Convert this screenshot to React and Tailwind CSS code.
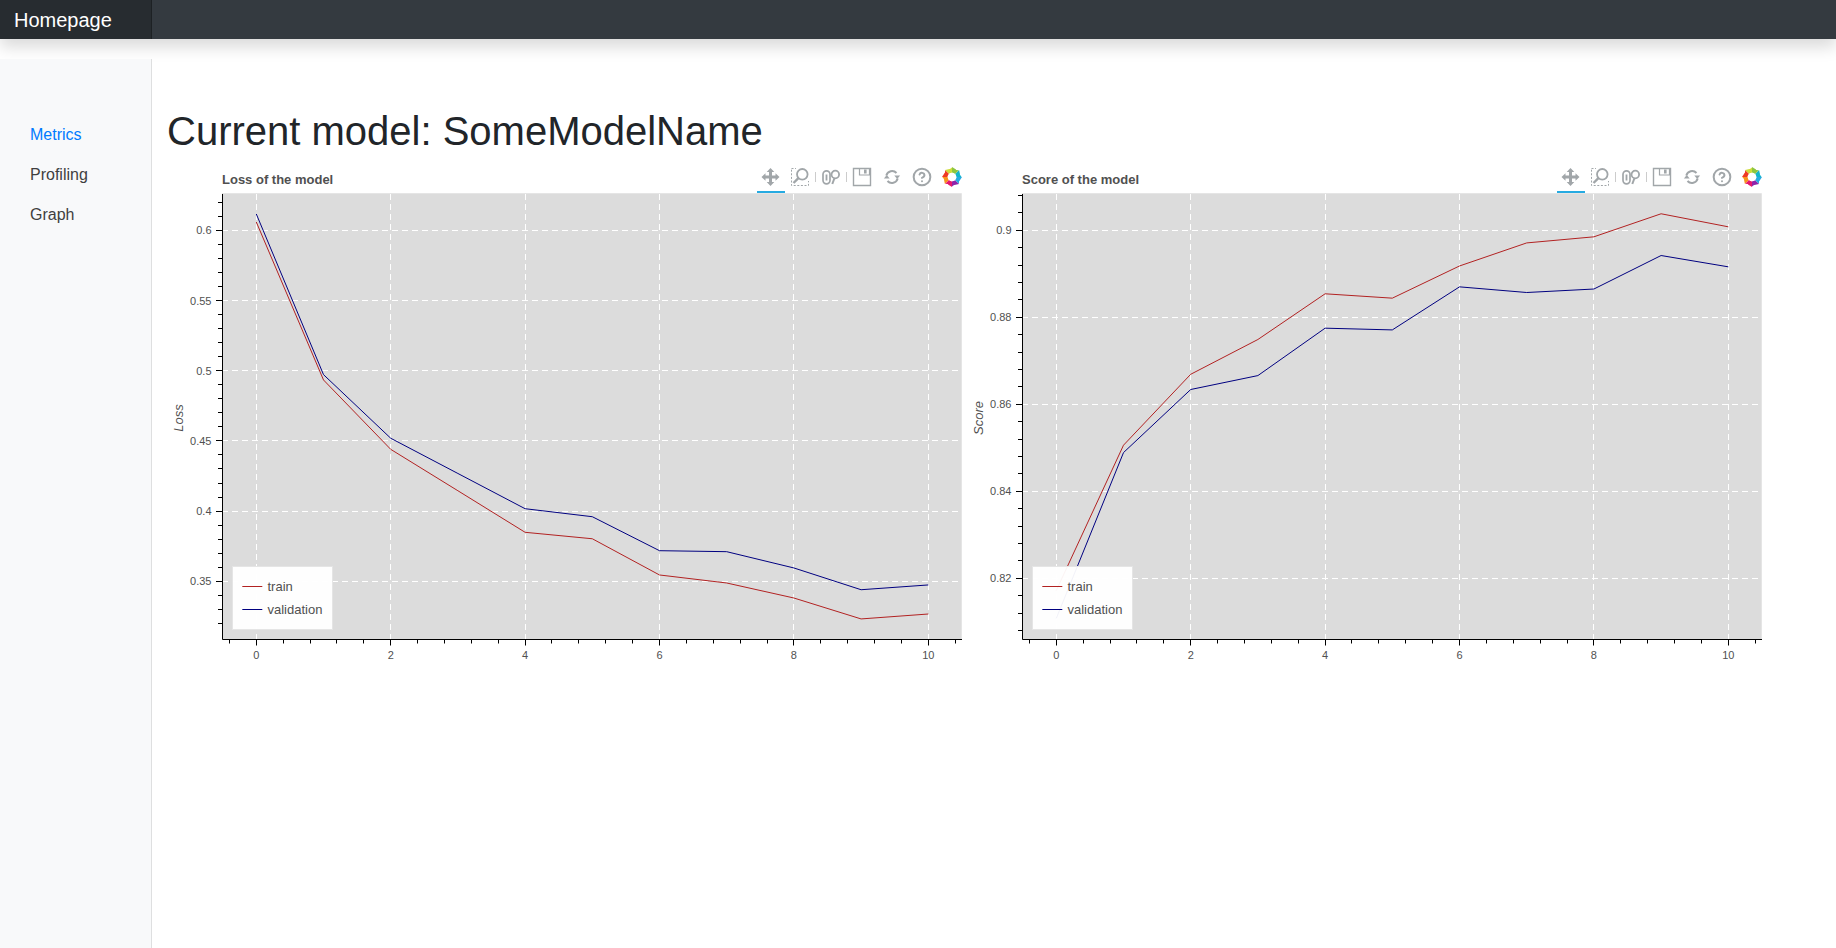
import React from "react";
import { CircleHelp } from "lucide-react";

const ICON = "#a1a6a9";
const CANVAS_TEXT = "#505050";

// plot geometry, in px inside the chart svg
const PLOT_LEFT = 55;
const PLOT_RIGHT = 795;
const PLOT_TOP = 1;
const PLOT_BOTTOM = 446.5;
const X0 = 89.3;
const X_STEP = 67.2;

const snap = (v) => Math.floor(v) + 0.5;
const xPos = (x) => X0 + x * X_STEP;

const charts = [
  {
    title: "Loss of the model",
    yLabel: "Loss",
    y0: 0.6,
    y0Px: 37.3,
    pxPerUnit: 1404,
    yTicks: [0.6, 0.55, 0.5, 0.45, 0.4, 0.35],
    minorStep: 0.01,
    yMinMax: [0.318, 0.626],
    train: [0.6059, 0.4934, 0.444, 0.4145, 0.3849, 0.3803, 0.3545, 0.3488, 0.3381, 0.3232, 0.3267],
    validation: [0.6116, 0.4972, 0.4519, 0.4268, 0.4017, 0.396, 0.3718, 0.3711, 0.3595, 0.344, 0.3474],
  },
  {
    title: "Score of the model",
    yLabel: "Score",
    y0: 0.9,
    y0Px: 37.3,
    pxPerUnit: 4350,
    yTicks: [0.9, 0.88, 0.86, 0.84, 0.82],
    minorStep: 0.004,
    yMinMax: [0.8064, 0.9088],
    train: [0.8172, 0.8506, 0.8669, 0.8749, 0.8854, 0.8844, 0.8918, 0.8971, 0.8985, 0.9038, 0.9008],
    validation: [0.8108, 0.8489, 0.8634, 0.8666, 0.8775, 0.8771, 0.887, 0.8857, 0.8865, 0.8942, 0.8916],
  },
];

function PanIcon() {
  return (
    <svg width="18" height="18" viewBox="0 0 18 18" fill={ICON} className="overflow-visible">
      <path
        d="M0 -9L3.8 -5H1.5V-1.5H5V-3.8L9 0L5 3.8V1.5H1.5V5H3.8L0 9L-3.8 5H-1.5V1.5H-5V3.8L-9 0L-5 -3.8V-1.5H-1.5V-5H-3.8Z"
        transform="translate(8.5 9)"
      />
    </svg>
  );
}

function BoxZoomIcon() {
  return (
    <svg width="20" height="20" viewBox="0 0 20 20" fill="none" stroke={ICON}>
      <rect x="1.5" y="1.5" width="17" height="17" strokeDasharray="2 1.6" strokeWidth="1" />
      <rect x="6" y="0" width="14" height="14" fill="#fff" stroke="none" />
      <circle cx="12.3" cy="7.3" r="5.3" strokeWidth="1.8" />
      <path d="M8.4 11.2L3.5 16" strokeWidth="2.4" />
    </svg>
  );
}

function WheelZoomIcon() {
  return (
    <svg width="20" height="20" viewBox="0 0 20 20" fill="none" stroke={ICON}>
      <rect x="2" y="3.8" width="7" height="13" rx="3.5" strokeWidth="1.7" />
      <path d="M5.5 7.5v6" strokeWidth="1.8" />
      <circle cx="14.3" cy="7.5" r="3.8" strokeWidth="1.8" />
      <path d="M13.3 11.5L11.3 17" strokeWidth="2" />
    </svg>
  );
}

function SaveIcon() {
  return (
    <svg width="20" height="20" viewBox="0 0 20 20" fill="none" stroke={ICON}>
      <path d="M1.5 1.5h17v17h-17z" strokeWidth="1.4" />
      <path d="M7.5 1.5v6.5h10v-6.5" strokeWidth="1.2" />
      <rect x="12" y="2.5" width="2.6" height="4" fill={ICON} stroke="none" />
    </svg>
  );
}

function ResetIcon() {
  return (
    <svg width="18" height="18" viewBox="0 0 18 18" fill="none" stroke={ICON} strokeWidth="2" className="overflow-visible">
      <path d="M3.3 7.5A6 6 0 0 1 13.5 5" />
      <path d="M14.7 10.5A6 6 0 0 1 4.5 13" />
      <path d="M11.3 7.5h5.8l-2.9 3.4z" fill={ICON} stroke="none" />
      <path d="M0.9 10.5h5.8l-2.9-3.4z" fill={ICON} stroke="none" />
    </svg>
  );
}

function BokehLogo() {
  const colors = ["#8dc63f", "#12b5cb", "#26aae1", "#8e24aa", "#e6186d", "#f7941d", "#ee3a24", "#cddc39"];
  return (
    <svg width="20" height="20" viewBox="0 0 20 20">
      {colors.map((c, i) => (
        <path
          key={c}
          d="M10 0L14 2.6L13.2 6.4L10 5.4z"
          fill={c}
          transform={`rotate(${i * 45} 10 10)`}
        />
      ))}
      {colors.map((c, i) => (
        <path
          key={"b" + c}
          d="M10 0.4L6.6 3L8 6L10 5.4z"
          fill={colors[(i + 7) % 8]}
          transform={`rotate(${i * 45} 10 10)`}
        />
      ))}
    </svg>
  );
}

function ToolButton({ children, active }) {
  return (
    <div
      className={`flex items-center justify-center h-[30px] border-b-2 ${
        active ? "w-[28px] ml-[2px] border-[#26aae1]" : "w-[30px] border-transparent"
      }`}
    >
      {children}
    </div>
  );
}

function ToolSeparator() {
  return (
    <div className="h-[30px] w-px flex items-center pb-[2px]">
      <div className="w-px h-[10px] bg-[#cccccc]" />
    </div>
  );
}

function Toolbar() {
  return (
    <div className="flex items-start">
      <ToolButton active>
        <PanIcon />
      </ToolButton>
      <ToolButton>
        <BoxZoomIcon />
      </ToolButton>
      <ToolSeparator />
      <ToolButton>
        <WheelZoomIcon />
      </ToolButton>
      <ToolSeparator />
      <ToolButton>
        <SaveIcon />
      </ToolButton>
      <ToolButton>
        <ResetIcon />
      </ToolButton>
      <ToolButton>
        <CircleHelp size={20} color={ICON} strokeWidth={2.4} />
      </ToolButton>
      <ToolButton>
        <BokehLogo />
      </ToolButton>
    </div>
  );
}

function Chart({ chart }) {
  const yPos = (v) => chart.y0Px + (chart.y0 - v) * chart.pxPerUnit;
  const line = (values) => values.map((v, i) => `${xPos(i)},${yPos(v)}`).join(" ");

  const xMinor = [];
  for (let i = -1; i <= 26; i++) {
    if (i % 5 !== 0) xMinor.push(i * 0.4);
  }
  const yMinor = [];
  const n = Math.round((chart.yMinMax[1] - chart.yMinMax[0]) / chart.minorStep);
  for (let i = 0; i <= n + 1; i++) {
    const v = chart.y0 + (Math.round((chart.yMinMax[0] - chart.y0) / chart.minorStep) + i) * chart.minorStep;
    if (yPos(v) > PLOT_TOP && yPos(v) < PLOT_BOTTOM) yMinor.push(v);
  }

  return (
    <div className="w-[800px] shrink-0">
      <div className="flex justify-between h-[30px]">
        <div className="pl-[55px] pt-[9px] text-[13px] leading-[15px] font-bold text-[#505050]">
          {chart.title}
        </div>
        <Toolbar />
      </div>
      <svg width="795" height="480" className="block" fontSize="11">
        <rect x={PLOT_LEFT} y={PLOT_TOP} width={PLOT_RIGHT - PLOT_LEFT} height={PLOT_BOTTOM - PLOT_TOP} fill="#dcdcdc" />
        <path d={`M${PLOT_LEFT} 0.5H${PLOT_RIGHT - 0.5}V${PLOT_BOTTOM}`} fill="none" stroke="#e5e5e5" />

        {[0, 2, 4, 6, 8, 10].map((x) => (
          <line key={x} x1={snap(xPos(x))} x2={snap(xPos(x))} y1={PLOT_TOP} y2={PLOT_BOTTOM} stroke="#fff" strokeDasharray="6 4" />
        ))}
        {chart.yTicks.map((v) => (
          <line key={v} x1={PLOT_LEFT} x2={PLOT_RIGHT} y1={snap(yPos(v))} y2={snap(yPos(v))} stroke="#fff" strokeDasharray="6 4" />
        ))}

        <polyline points={line(chart.train)} fill="none" stroke="#b22222" />
        <polyline points={line(chart.validation)} fill="none" stroke="#000080" />

        <path d={`M${PLOT_LEFT + 0.5} 1V${PLOT_BOTTOM}H${PLOT_RIGHT}`} fill="none" stroke="#000" />
        {xMinor.map((x) => (
          <line key={x} x1={snap(xPos(x))} x2={snap(xPos(x))} y1={PLOT_BOTTOM} y2={PLOT_BOTTOM + 4} stroke="#000" />
        ))}
        {[0, 2, 4, 6, 8, 10].map((x) => (
          <g key={x}>
            <line x1={snap(xPos(x))} x2={snap(xPos(x))} y1={PLOT_BOTTOM} y2={PLOT_BOTTOM + 6} stroke="#000" />
            <text x={xPos(x)} y={PLOT_BOTTOM + 19.5} textAnchor="middle" fill={CANVAS_TEXT}>
              {x}
            </text>
          </g>
        ))}
        {yMinor.map((v) => (
          <line key={v} x1={PLOT_LEFT - 4} x2={PLOT_LEFT} y1={snap(yPos(v))} y2={snap(yPos(v))} stroke="#000" />
        ))}
        {chart.yTicks.map((v) => (
          <g key={v}>
            <line x1={PLOT_LEFT - 6} x2={PLOT_LEFT} y1={snap(yPos(v))} y2={snap(yPos(v))} stroke="#000" />
            <text x={PLOT_LEFT - 10.5} y={yPos(v) + 4} textAnchor="end" fill={CANVAS_TEXT}>
              {v}
            </text>
          </g>
        ))}
        <text
          transform="translate(16 225) rotate(-90)"
          textAnchor="middle"
          fontSize="13"
          fontStyle="italic"
          fill={CANVAS_TEXT}
        >
          {chart.yLabel}
        </text>

        <rect x="65.5" y="373.5" width="100" height="63" fill="#fff" fillOpacity="0.95" stroke="#e5e5e5" />
        <line x1="75.3" x2="95.3" y1="393.5" y2="393.5" stroke="#b22222" />
        <line x1="75.3" x2="95.3" y1="416.5" y2="416.5" stroke="#000080" />
        <text x="100.5" y="397.5" fontSize="13" fill={CANVAS_TEXT}>
          train
        </text>
        <text x="100.5" y="420.5" fontSize="13" fill={CANVAS_TEXT}>
          validation
        </text>
      </svg>
    </div>
  );
}

export default function App() {
  const navItems = ["Metrics", "Profiling", "Graph"];

  return (
    <div className="h-screen overflow-hidden flex flex-col bg-white font-['Liberation_Sans',sans-serif]">
      {/* Navbar */}
      <div className="relative h-[39px] shrink-0 flex bg-[#343a40] shadow-[0_8px_16px_rgba(0,0,0,0.15)]">
        <div className="w-[152px] pl-[14px] flex items-center text-xl text-white bg-[#272c30] shadow-[inset_-1px_0_0_rgba(0,0,0,0.25)]">
          Homepage
        </div>
      </div>

      <div className="flex-1 flex">
        {/* Sidebar */}
        <div className="relative w-[152px] shrink-0 mt-[20px] pt-[56px] pl-[30px] bg-[#f8f9fa] shadow-[inset_-1px_0_0_rgba(0,0,0,0.1)]">
          {navItems.map((item, i) => (
            <div
              key={item}
              className={`h-[40px] flex items-center text-base ${i === 0 ? "text-[#007bff]" : "text-[#3f3f3f]"}`}
            >
              {item}
            </div>
          ))}
        </div>

        {/* Main */}
        <div className="flex-1 pl-[15px] pt-[68px]">
          <h1 className="text-[40px] leading-[48px] mb-2 text-[#212529]">Current model: SomeModelName</h1>
          <div className="flex">
            {charts.map((chart) => (
              <Chart key={chart.title} chart={chart} />
            ))}
          </div>
        </div>
      </div>
    </div>
  );
}
